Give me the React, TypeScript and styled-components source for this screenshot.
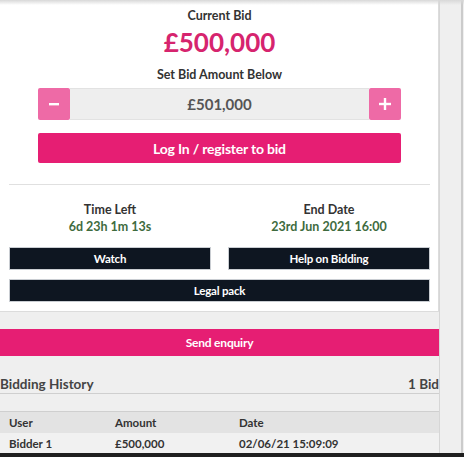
import React from 'react'
import styled, { createGlobalStyle } from 'styled-components'

const Global = createGlobalStyle`
  html, body {
    margin: 0;
    padding: 0;
    background: #efefef;
  }
  body {
    font-family: Lato, 'Open Sans', sans-serif;
    color: #333;
  }
`

const Page = styled.div`
  position: relative;
  width: 464px;
  height: 457px;
  overflow: hidden;
  display: flex;
  flex-direction: column;
  background: #efefef;

  &::before {
    content: '';
    position: absolute;
    top: 0;
    left: 0;
    right: 0;
    height: 5px;
    background: linear-gradient(#d8d8d8, rgba(239, 239, 239, 0));
  }
`

const Body = styled.div`
  flex: 1;
  display: flex;
  min-height: 0;
`

const Column = styled.div`
  width: 440px;
  border-right: 1px solid #d6d6d6;
  box-sizing: border-box;
`

const Gutter = styled.div`
  flex: 1;
  margin-right: 1px;
  border-right: 2px solid #cbcbcb;
`

const Card = styled.section`
  background: #fff;
  border: 1px solid #dcdcdc;
  border-top: none;
  border-left: none;
  padding: 8px 8px 9px 9px;
`

const Label = styled.div`
  font-size: 12.5px;
  line-height: 16px;
  font-weight: 700;
  text-align: center;
  color: #333;
`

const Price = styled.div`
  margin-top: 4px;
  font-size: 26px;
  line-height: 28px;
  font-weight: 700;
  text-align: center;
  color: #d6246e;
`

const BidBox = styled.div`
  padding: 0 29px;
  margin-top: 11px;
`

const Stepper = styled.div`
  display: flex;
  height: 32px;
  margin-top: 5px;
`

const StepButton = styled.button`
  width: 32px;
  border: none;
  padding: 0;
  border-radius: 2px;
  background: #ee6aa6;
  display: flex;
  align-items: center;
  justify-content: center;
`

const Amount = styled.div`
  flex: 1;
  background: #eeeeee;
  border-top: 1px solid #e2e2e2;
  border-bottom: 1px solid #e2e2e2;
  display: flex;
  align-items: center;
  justify-content: center;
  font-size: 15px;
  font-weight: 700;
  color: #555;
`

const PinkButton = styled.button<{ flat?: boolean }>`
  display: block;
  width: 100%;
  border: none;
  background: #e61e73;
  color: #fff;
  font-family: inherit;
  font-weight: 700;
  font-size: ${p => (p.flat ? '12px' : '14px')};
  height: ${p => (p.flat ? '27px' : '30px')};
  border-radius: ${p => (p.flat ? '0' : '2px')};
  letter-spacing: -0.2px;
`

const LoginButton = styled(PinkButton)`
  margin-top: 13px;
`

const Divider = styled.hr`
  border: none;
  border-top: 1px solid #e0e0e0;
  margin: 21px 0 0;
`

const Grid = styled.div<{ top: number }>`
  display: grid;
  grid-template-columns: 1fr 1fr;
  column-gap: 17px;
  margin-top: ${p => p.top}px;
`

const Info = styled.div`
  text-align: center;
`

const Value = styled.div`
  font-size: 12.5px;
  line-height: 17px;
  font-weight: 700;
  color: #3e6b3e;
`

const DarkButton = styled.button<{ wide?: boolean }>`
  grid-column: ${p => (p.wide ? '1 / span 2' : 'auto')};
  height: 23px;
  border: 1px solid #c9cdd2;
  background: #0e1621;
  color: #fff;
  font-family: inherit;
  font-size: 11.5px;
  font-weight: 700;
  padding: 0;
  letter-spacing: -0.2px;
`

const ButtonStack = styled.div`
  display: flex;
  flex-direction: column;
  gap: 9px;
  margin-top: 12px;
`

const EnquiryWrap = styled.div`
  margin-top: 17px;
`

const HistoryHead = styled.div`
  margin-top: 18px;
  display: flex;
  justify-content: space-between;
  align-items: center;
  height: 19px;
  border-bottom: 1px solid #cfcfcf;
  font-size: 13.5px;
  font-weight: 700;
  color: #444;
`

const Table = styled.table`
  margin-top: 17px;
  width: 100%;
  border-collapse: collapse;
  border-top: 1px solid #cfcfcf;
  font-size: 11.5px;
  color: #333;
`

const Th = styled.th`
  background: #e3e3e3;
  text-align: left;
  font-weight: 700;
  height: 21px;
  padding: 0 0 0 9px;
`

const Td = styled.td`
  background: #f1f1f1;
  font-weight: 700;
  height: 21px;
  padding: 0 0 0 9px;
`

const Taskbar = styled.div`
  height: 4px;
  background: #1f1f1f;
`

const Minus = () => (
  <svg width="12" height="12" viewBox="0 0 12 12">
    <rect x="1" y="5" width="10" height="2.4" fill="#fff" />
  </svg>
)

const Plus = () => (
  <svg width="14" height="14" viewBox="0 0 14 14">
    <rect x="1" y="5.8" width="12" height="2.4" fill="#fff" />
    <rect x="5.8" y="1" width="2.4" height="12" fill="#fff" />
  </svg>
)

export default function App() {
  return (
    <>
      <Global />
      <Page>
        <Body>
          <Column>
            <Card>
              <Label>Current Bid</Label>
              <Price>£500,000</Price>
              <BidBox>
                <Label>Set Bid Amount Below</Label>
                <Stepper>
                  <StepButton aria-label="decrease">
                    <Minus />
                  </StepButton>
                  <Amount>£501,000</Amount>
                  <StepButton aria-label="increase">
                    <Plus />
                  </StepButton>
                </Stepper>
                <LoginButton>Log In / register to bid</LoginButton>
              </BidBox>
              <Divider />
              <Grid top={17}>
                <Info>
                  <Label>Time Left</Label>
                  <Value>6d 23h 1m 13s</Value>
                </Info>
                <Info>
                  <Label>End Date</Label>
                  <Value>23rd Jun 2021 16:00</Value>
                </Info>
              </Grid>
              <ButtonStack>
                <Grid top={0}>
                  <DarkButton>Watch</DarkButton>
                  <DarkButton>Help on Bidding</DarkButton>
                </Grid>
                <DarkButton wide>Legal pack</DarkButton>
              </ButtonStack>
            </Card>
            <EnquiryWrap>
              <PinkButton flat>Send enquiry</PinkButton>
            </EnquiryWrap>
            <HistoryHead>
              <span>Bidding History</span>
              <span>1 Bid</span>
            </HistoryHead>
            <Table>
              <thead>
                <tr>
                  <Th style={{ width: 97 }}>User</Th>
                  <Th style={{ width: 115 }}>Amount</Th>
                  <Th>Date</Th>
                </tr>
              </thead>
              <tbody>
                <tr>
                  <Td>Bidder 1</Td>
                  <Td>£500,000</Td>
                  <Td>02/06/21 15:09:09</Td>
                </tr>
              </tbody>
            </Table>
          </Column>
          <Gutter />
        </Body>
        <Taskbar />
      </Page>
    </>
  )
}
